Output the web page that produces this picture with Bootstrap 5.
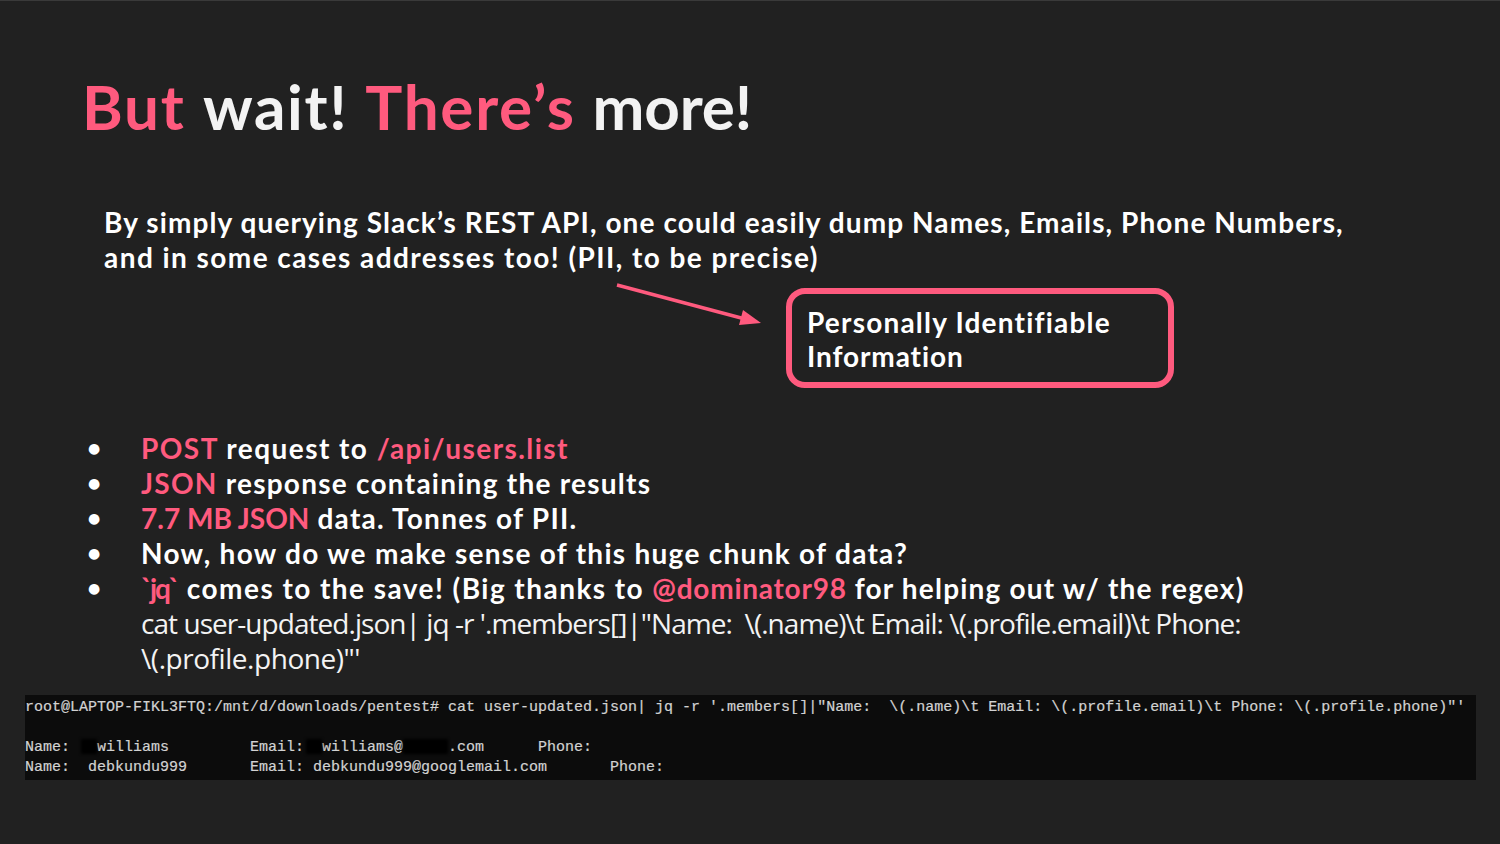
<!DOCTYPE html>
<html lang="en"><head><meta charset="utf-8"><title>But wait! There's more!</title>
<link href="https://cdn.jsdelivr.net/npm/bootstrap@5.3.0/dist/css/bootstrap.min.css" rel="stylesheet">
<style>
html,body{height:100%;margin:0}
body{background:#212121;font-family:"Lato","Liberation Sans",sans-serif;overflow:hidden}
.slide{width:1500px;height:844px;position:relative;border-top:1px solid #3a3a3a;padding:0 24px 0 25px}
.pk{color:#ff5a7e}
.ttl{margin:63px 0 0 57px;font:700 62px/84px "Lato",sans-serif;color:#f3f3f3;letter-spacing:1.7px;word-spacing:2px;white-space:nowrap}
.ttl-end{letter-spacing:-.2px;margin-left:-2px}
.intro{margin:57px 0 0 79px;font:700 28px/35px "Lato",sans-serif;color:#fff;white-space:nowrap}
.l1{letter-spacing:1.09px}.l2{letter-spacing:1.44px}
.callrow{margin:13px 0 0 761px;height:100px;width:388px}
.callout{border:6px solid #ff5a7e;border-radius:19px;padding:11px 0 0 15px;width:388px;height:100px;font:700 28px/34px "Lato",sans-serif;color:#fff}
.c1{letter-spacing:1.2px}.c2{letter-spacing:.9px}
.arrow{position:absolute;left:610px;top:275px}
.bul{margin:43px 0 0 0;padding:0;list-style:none;font:700 28px/35px "Lato",sans-serif;color:#fff}
.bul li{position:relative;padding-left:116px;white-space:nowrap}
.bul li.dot::before{content:"●";position:absolute;left:63px;font:400 14px/35px "DejaVu Sans",sans-serif;color:#fff}
.b1{letter-spacing:1.45px}.b2{letter-spacing:1.25px}.b3{letter-spacing:1.25px}.b4{letter-spacing:1.28px}.b5{letter-spacing:1.2px}
.b3 .pk{letter-spacing:0}
.tick{letter-spacing:-2.2px;margin-right:1px}
.wide-run{letter-spacing:1.45px}
.b5 .handle{letter-spacing:.75px}
.plain{font:400 28px/35px "Open Sans",sans-serif;color:#f3f3f3}
.p1{letter-spacing:-.95px}.p2{letter-spacing:-.45px}
.term{margin-top:19px;height:85px;background:#0c0c0c;color:#d2d2d2;font:400 15px/20px "Liberation Mono",monospace;padding:3px 0 0 0;overflow:hidden;-webkit-text-stroke:.2px #d2d2d2}
.term-row{height:20px;white-space:pre}
.blot{display:inline-block;background:#000;height:15px;vertical-align:-3px;filter:blur(1.5px)}
.w1{width:16px;margin-left:-7px}.w5{width:45px}
</style></head><body>
<div class="slide">
<h1 class="ttl"><span class="pk">But</span> wait! <span class="pk">There’s</span> <span class="ttl-end">more!</span></h1>
<p class="intro mb-0"><span class="l1">By simply querying Slack’s REST API, one could easily dump Names, Emails, Phone Numbers,</span><br><span class="l2">and in some cases addresses too! (PII, to be precise)</span></p>
<div class="callrow"><div class="callout"><span class="c1">Personally Identifiable</span><br><span class="c2">Information</span></div></div>
<svg class="arrow" width="160" height="55" viewBox="0 0 160 55"><path d="M7 9 L135 43" stroke="#ff5a7e" stroke-width="3.4" fill="none"/><path d="M151 47 L129 49 L133 34 Z" fill="#ff5a7e"/></svg>
<ul class="bul">
<li class="dot b1"><span class="pk">POST</span> request to <span class="pk">/api/users.list</span></li>
<li class="dot b2"><span class="pk">JSON</span> response containing the results</li>
<li class="dot b3"><span class="pk">7.7 MB JSON</span> data. Tonnes of PII.</li>
<li class="dot b4">Now, how do we make sense of this huge chunk of data?</li>
<li class="dot b5"><span class="pk tick">`jq`</span><span class="wide-run"> comes to the save! (Big thanks to </span><span class="pk handle">@dominator98</span> for helping out w/ the regex)</li>
<li class="plain p1">cat user-updated.json| jq -r '.members[]|"Name:&nbsp; \(.name)\t Email: \(.profile.email)\t Phone:</li>
<li class="plain p2">\(.profile.phone)"'</li>
</ul>
<div class="term">
<div class="term-row">root@LAPTOP-FIKL3FTQ:/mnt/d/downloads/pentest# cat user-updated.json| jq -r '.members[]|"Name:  \(.name)\t Email: \(.profile.email)\t Phone: \(.profile.phone)"'</div>
<div class="term-row"></div>
<div class="term-row">Name:  <span class="blot w1"></span>williams         Email: <span class="blot w1"></span>williams@<span class="blot w5"></span>.com      Phone:</div>
<div class="term-row">Name:  debkundu999       Email: debkundu999@googlemail.com       Phone:</div>
</div>
</div>
<script src="https://cdn.jsdelivr.net/npm/bootstrap@5.3.0/dist/js/bootstrap.bundle.min.js"></script>
</body></html>
